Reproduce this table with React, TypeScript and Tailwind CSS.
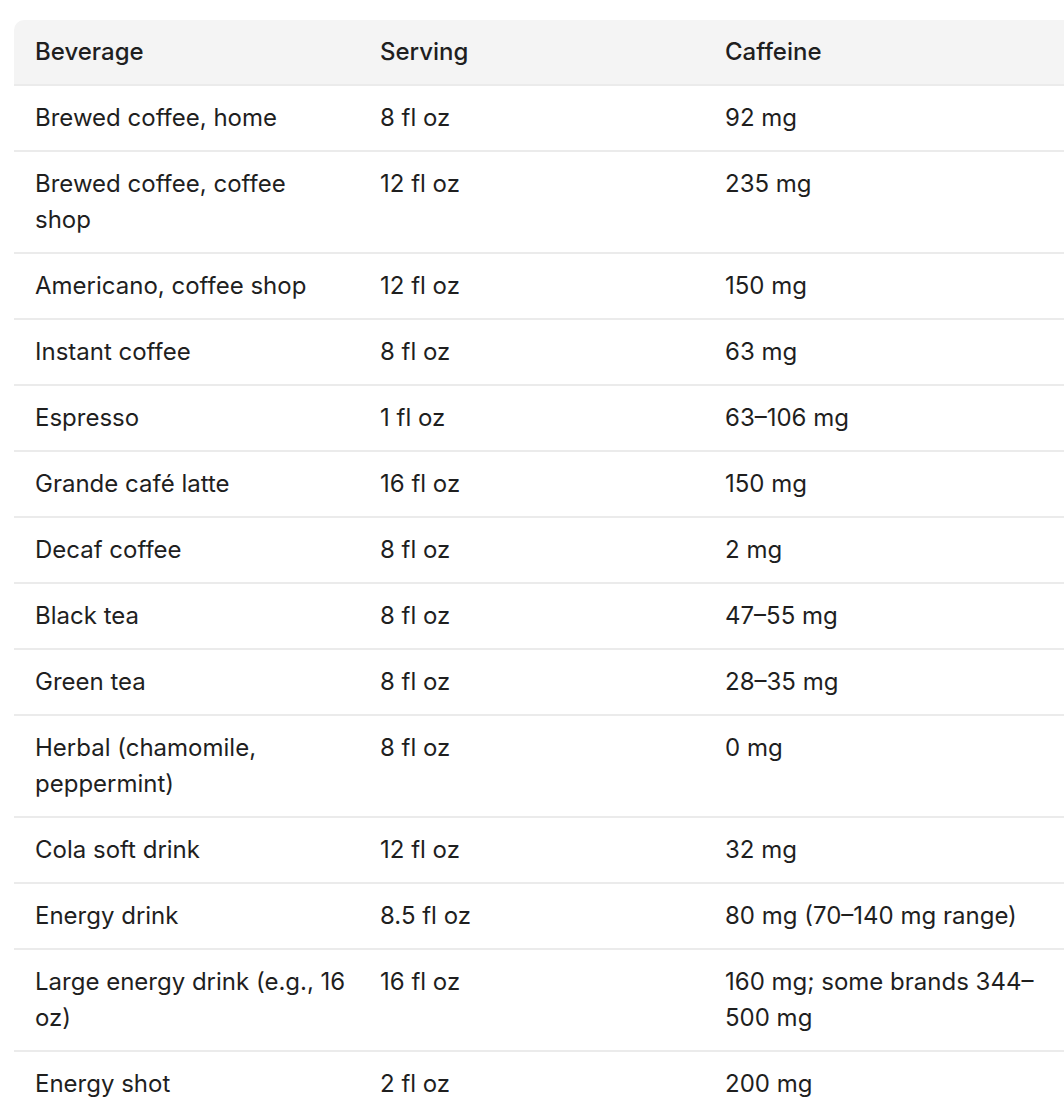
import React from 'react';

type Row = { beverage: string; serving: string; caffeine: string };

const ROWS: Row[] = [
  { beverage: 'Brewed coffee, home', serving: '8 fl oz', caffeine: '92 mg' },
  { beverage: 'Brewed coffee, coffee shop', serving: '12 fl oz', caffeine: '235 mg' },
  { beverage: 'Americano, coffee shop', serving: '12 fl oz', caffeine: '150 mg' },
  { beverage: 'Instant coffee', serving: '8 fl oz', caffeine: '63 mg' },
  { beverage: 'Espresso', serving: '1 fl oz', caffeine: '63–106 mg' },
  { beverage: 'Grande café latte', serving: '16 fl oz', caffeine: '150 mg' },
  { beverage: 'Decaf coffee', serving: '8 fl oz', caffeine: '2 mg' },
  { beverage: 'Black tea', serving: '8 fl oz', caffeine: '47–55 mg' },
  { beverage: 'Green tea', serving: '8 fl oz', caffeine: '28–35 mg' },
  { beverage: 'Herbal (chamomile, peppermint)', serving: '8 fl oz', caffeine: '0 mg' },
  { beverage: 'Cola soft drink', serving: '12 fl oz', caffeine: '32 mg' },
  { beverage: 'Energy drink', serving: '8.5 fl oz', caffeine: '80 mg (70–140 mg range)' },
  { beverage: 'Large energy drink (e.g., 16 oz)', serving: '16 fl oz', caffeine: '160 mg; some brands 344–500 mg' },
  { beverage: 'Energy shot', serving: '2 fl oz', caffeine: '200 mg' },
];

const App: React.FC = () => {
  return (
    <div className="min-h-screen bg-white overflow-hidden text-[#1f1f1f] font-['Inter','Liberation_Sans',sans-serif]">
      <div className="pt-[20px] pl-[14px] w-[1100px]">
        <table className="table-fixed border-collapse w-[1086px] text-[24px] leading-[36px]">
          <colgroup>
            <col className="w-[345px]" />
            <col className="w-[345px]" />
            <col />
          </colgroup>
          {/* header */}
          <thead>
            <tr className="bg-[#f4f4f4] border-b-2 border-[#ebebeb]">
              <th className="rounded-tl-[10px] text-left font-medium px-[21px] py-[14px] align-top">Beverage</th>
              <th className="text-left font-medium px-[21px] py-[14px] align-top">Serving</th>
              <th className="text-left font-medium px-[21px] py-[14px] align-top">Caffeine</th>
            </tr>
          </thead>
          <tbody>
            {ROWS.map((r) => (
              <tr key={r.beverage} className="border-b-2 border-[#ebebeb]">
                <td className="pl-[21px] pr-[12px] py-[14px] align-top">{r.beverage}</td>
                <td className="px-[21px] py-[14px] align-top">{r.serving}</td>
                <td className="pl-[21px] pr-[62px] py-[14px] align-top">{r.caffeine}</td>
              </tr>
            ))}
          </tbody>
        </table>
      </div>
    </div>
  );
};

export default App;
